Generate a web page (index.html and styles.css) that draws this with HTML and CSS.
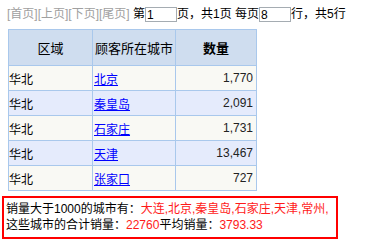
FILE: index.html
```html
<!DOCTYPE html>
<html lang="zh-CN">
<head>
    <meta charset="UTF-8">
    <title>城市销量</title>
    <link rel="stylesheet" href="styles.css">
</head>
<body>
    <div class="pager">
        <span class="nav">[首页][上页][下页][尾页]</span>
        第<input type="text" class="page-input" value="1">页，共1页 每页<input type="text" class="page-input" value="8">行，共5行
    </div>
    <table class="grid">
        <tr>
            <th class="col-area">区域</th>
            <th class="col-city">顾客所在城市</th>
            <th class="col-qty"><b>数量</b></th>
        </tr>
        <tr class="odd">
            <td>华北</td>
            <td><a href="#">北京</a></td>
            <td class="num">1,770</td>
        </tr>
        <tr class="even">
            <td>华北</td>
            <td><a href="#">秦皇岛</a></td>
            <td class="num">2,091</td>
        </tr>
        <tr class="odd">
            <td>华北</td>
            <td><a href="#">石家庄</a></td>
            <td class="num">1,731</td>
        </tr>
        <tr class="even">
            <td>华北</td>
            <td><a href="#">天津</a></td>
            <td class="num">13,467</td>
        </tr>
        <tr class="odd">
            <td>华北</td>
            <td><a href="#">张家口</a></td>
            <td class="num">727</td>
        </tr>
    </table>
    <div class="summary">
        销量大于1000的城市有：<span class="hl">大连,北京,秦皇岛,石家庄,天津,常州,</span><br>
        这些城市的合计销量：<span class="hl">22760</span>平均销量：<span class="hl">3793.33</span>
    </div>
</body>
</html>
```

FILE: styles.css
```css
body {
    margin: 0;
    padding: 0 2px;
    background-color: #ffffff;
    color: #000000;
    font-family: "Liberation Sans", "Noto Sans CJK SC", sans-serif;
    font-size: 12px;
}
.pager {
    height: 29px;
    padding-left: 5px;
    line-height: 29px;
    white-space: nowrap;
}
.nav {
    color: #a0a0a0;
}
.page-input {
    width: 28px;
    height: 13px;
    margin: 0;
    padding: 0 1px;
    border: 1px solid #a5acb2;
    font-family: "Liberation Sans", sans-serif;
    font-size: 12px;
    color: #000000;
    vertical-align: middle;
}
.grid {
    width: 249px;
    margin-left: 6px;
    border-collapse: collapse;
    table-layout: fixed;
}
.grid th, .grid td {
    border: 1px solid #a9c8ec;
    padding: 0;
}
.grid th {
    height: 35px;
    background-color: #cfddef;
    font-weight: normal;
    text-align: center;
    font-size: 13px;
}
.grid td {
    height: 24px;
    text-align: left;
}
.col-area {
    width: 83px;
}
.col-city {
    width: 82px;
}
.grid tr.odd td {
    background-color: #f9f9f4;
}
.grid tr.even td {
    background-color: #e5ebfc;
}
.grid a {
    color: #0000ff;
    padding-left: 1px;
}
.grid td.num {
    text-align: right;
    padding-right: 3px;
    color: #222222;
}
.summary {
    width: 328px;
    margin-top: 5px;
    padding: 3px 2px 4px;
    border: 2px solid #ff0000;
    line-height: 16px;
}
.hl {
    color: #ff1a1a;
}
```
